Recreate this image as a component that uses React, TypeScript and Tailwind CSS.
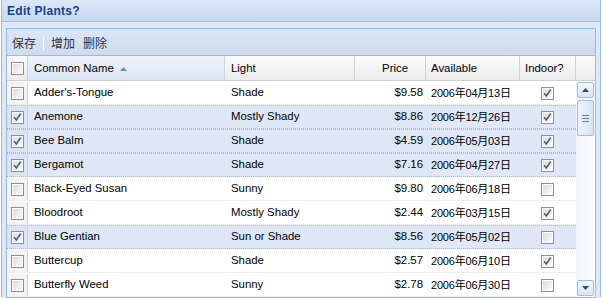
const plants = [
  { name: "Adder's-Tongue", light: "Shade", price: "$9.58", date: "2006年04月13日", indoor: true, sel: false },
  { name: "Anemone", light: "Mostly Shady", price: "$8.86", date: "2006年12月26日", indoor: true, sel: true },
  { name: "Bee Balm", light: "Shade", price: "$4.59", date: "2006年05月03日", indoor: true, sel: true },
  { name: "Bergamot", light: "Shade", price: "$7.16", date: "2006年04月27日", indoor: true, sel: true },
  { name: "Black-Eyed Susan", light: "Sunny", price: "$9.80", date: "2006年06月18日", indoor: false, sel: false },
  { name: "Bloodroot", light: "Mostly Shady", price: "$2.44", date: "2006年03月15日", indoor: true, sel: false },
  { name: "Blue Gentian", light: "Sun or Shade", price: "$8.56", date: "2006年05月02日", indoor: false, sel: true },
  { name: "Buttercup", light: "Shade", price: "$2.57", date: "2006年06月10日", indoor: true, sel: false },
  { name: "Butterfly Weed", light: "Sunny", price: "$2.78", date: "2006年06月30日", indoor: false, sel: false },
];

const Check = ({ on }: { on: boolean }) => (
  <svg width="13" height="13" viewBox="0 0 13 13" className="block">
    <defs>
      <linearGradient id="cbg" x1="0" y1="0" x2="1" y2="1">
        <stop offset="0" stopColor="#dcdcdc" />
        <stop offset="1" stopColor="#fbfbfb" />
      </linearGradient>
    </defs>
    <rect x="0.5" y="0.5" width="12" height="12" fill="#fff" stroke="#8e8f8f" />
    <rect x="2" y="2" width="9" height="9" fill="url(#cbg)" />
    {on && <path d="M3.2 6.3 L5.3 9 L9.6 2.8" fill="none" stroke="#4a5b85" strokeWidth="1.6" />}
  </svg>
);

const cols = "grid-cols-[21px_197px_130px_71px_94px_56px]";

export default function App() {
  return (
    <div className="w-[603px] h-[298px] bg-white pl-px pr-[2px] font-['Liberation_Sans','Noto_Sans_CJK_SC',sans-serif] text-[11.4px] text-black">
      <div className="h-[297px] border-x border-b border-[#99bbe8] flex flex-col">
        <div className="h-[22px] shrink-0 border-b border-[#99bbe8] bg-gradient-to-b from-[#dce7f6] to-[#c9d9f0] px-[5px] flex items-center font-bold text-[#15428b] text-[12px] tracking-[0.3px]">
          Edit Plants?
        </div>
        <div className="flex-1 bg-[#dfe8f6] px-[4px] pt-[6px] pb-[4px] flex flex-col">
          <div className="flex-1 border border-[#99bbe8] bg-white flex flex-col overflow-hidden">
            <div className="h-[27px] shrink-0 bg-gradient-to-b from-[#dbe6f5] to-[#cfdcef] border-b border-[#99bbe8] flex items-center pl-[3px] pt-[3px] text-[#333] text-[12px]">
              <span className="px-[2px]">保存</span>
              <span className="mx-[5px] w-px h-[15px] bg-[#aac1e0] border-r border-white" />
              <span className="px-[2px]">增加</span>
              <span className="px-[2px] ml-[4px]">删除</span>
            </div>
            <div className="h-[25px] shrink-0 flex border-b border-[#d0d0d0] bg-gradient-to-b from-[#fafafa] to-[#ececec]">
              <div className={`grid ${cols}`}>
                <div className="border-r border-[#d0d0d0] flex items-center pl-[4px]">
                  <Check on={false} />
                </div>
                <div className="border-r border-[#c5d6ea] bg-gradient-to-b from-[#eef4fc] to-[#dbe7f6] flex items-center pl-[6px] pt-[2px] gap-[6px]">
                  Common Name
                  <svg width="7" height="4" viewBox="0 0 7 4"><path d="M0 4 L3.5 0 L7 4 Z" fill="#6b8fc2" /></svg>
                </div>
                <div className="border-r border-[#d0d0d0] flex items-center pl-[6px] pt-[2px]">Light</div>
                <div className="border-r border-[#d0d0d0] flex items-center justify-end pr-[17px] pt-[2px]">Price</div>
                <div className="border-r border-[#d0d0d0] flex items-center pl-[5px] pt-[2px]">Available</div>
                <div className="border-r border-[#d0d0d0] flex items-center pl-[5px] pt-[2px]">Indoor?</div>
              </div>
              <div className="flex-1" />
            </div>
            <div className="flex-1 flex overflow-hidden">
              <div className="w-[569px] shrink-0">
                {plants.map((p) => (
                  <div
                    key={p.name}
                    className={`h-[24px] grid ${cols} grid-rows-[22px] whitespace-nowrap ${
                      p.sel ? "bg-[#dfe8f6] border-y border-dotted border-[#a3bae9]" : "bg-white border-y border-t-white border-b-[#ededed]"
                    }`}
                  >
                    <div className={`border-r border-[#d0d0d0] flex items-center pl-[4px] ${p.sel ? "bg-[#dae4f3]" : "bg-[#f3f3f3]"}`}>
                      <Check on={p.sel} />
                    </div>
                    <div className="flex items-center pl-[6px]">{p.name}</div>
                    <div className="flex items-center pl-[6px]">{p.light}</div>
                    <div className="flex items-center justify-end pr-[3px]">{p.price}</div>
                    <div className="flex items-center pl-[5px] text-[11px] tracking-[-0.2px]">{p.date}</div>
                    <div className="flex items-center justify-center pr-[2px]">
                      <Check on={p.indoor} />
                    </div>
                  </div>
                ))}
              </div>
              <div className="flex-1 bg-gradient-to-r from-[#f1f5fb] to-[#fbfcfe] flex flex-col items-center pt-[1px] pb-[1px]">
                <div className="w-[17px] h-[16px] rounded-[2px] border border-[#a5bbd8] bg-gradient-to-b from-[#f4f8fd] to-[#d8e5f6] flex items-center justify-center">
                  <svg width="7" height="4" viewBox="0 0 7 4"><path d="M0 4 L3.5 0 L7 4 Z" fill="#2a4c80" /></svg>
                </div>
                <div className="mt-[2px] w-[17px] h-[36px] rounded-[2px] border border-[#a5bbd8] bg-gradient-to-r from-[#eef4fc] to-[#d8e5f6] flex flex-col items-center justify-center gap-[2px]">
                  <span className="w-[7px] h-px bg-[#5f7fae]" />
                  <span className="w-[7px] h-px bg-[#5f7fae]" />
                  <span className="w-[7px] h-px bg-[#5f7fae]" />
                </div>
                <div className="flex-1" />
                <div className="w-[17px] h-[16px] rounded-[2px] border border-[#a5bbd8] bg-gradient-to-b from-[#f4f8fd] to-[#d8e5f6] flex items-center justify-center">
                  <svg width="7" height="4" viewBox="0 0 7 4"><path d="M0 0 L3.5 4 L7 0 Z" fill="#2a4c80" /></svg>
                </div>
              </div>
            </div>
          </div>
        </div>
      </div>
    </div>
  );
}
